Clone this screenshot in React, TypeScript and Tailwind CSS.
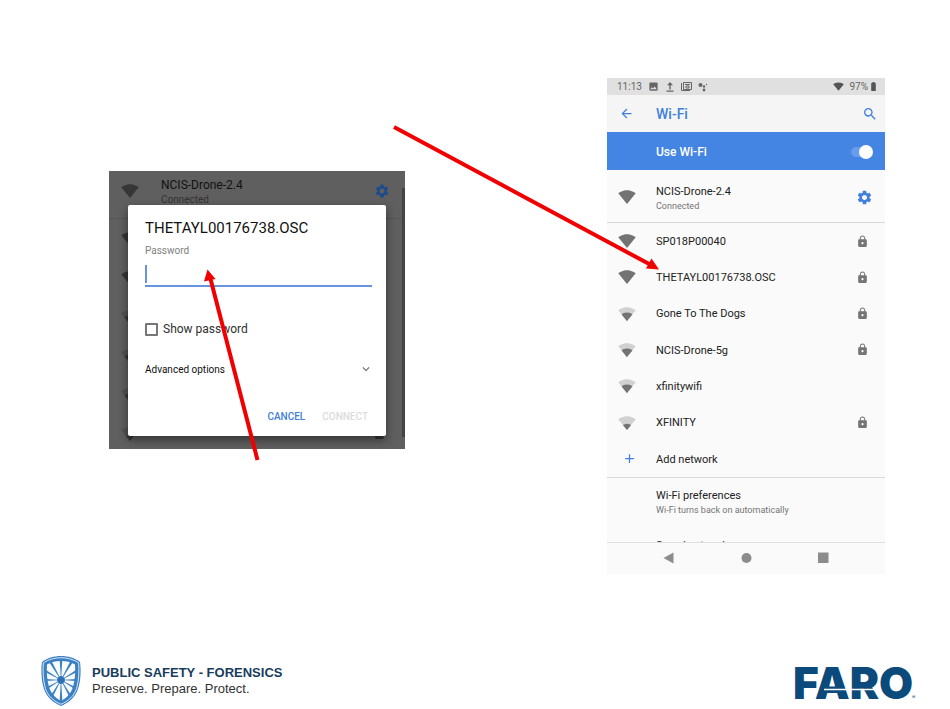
import React from 'react';
import {
  MdAdd,
  MdArrowBack,
  MdBatteryFull,
  MdExpandMore,
  MdImage,
  MdLock,
  MdSearch,
  MdSettings,
} from 'react-icons/md';

interface Network {
  name: string;
  bars: number;
  locked: boolean;
}

const networks: Network[] = [
  { name: 'SP018P00040', bars: 4, locked: true },
  { name: 'THETAYL00176738.OSC', bars: 4, locked: true },
  { name: 'Gone To The Dogs', bars: 2, locked: true },
  { name: 'NCIS-Drone-5g', bars: 2, locked: true },
  { name: 'xfinitywifi', bars: 2, locked: false },
  { name: 'XFINITY', bars: 1, locked: true },
];

function WifiIcon({ bars, className }: { bars: number; className?: string }) {
  return (
    <svg viewBox="0 0 24 24" fill="currentColor" className={className} aria-hidden="true">
      <path
        opacity={bars === 4 ? 1 : 0.3}
        d="M12.01 21.49L23.64 7c-.45-.34-4.93-4-11.64-4C5.28 3 .81 6.66.36 7l11.63 14.49.01.01z"
      />
      {bars === 2 && <path d="M4.79 12.52l7.2 8.98H12l.01-.01 7.2-8.98C18.85 12.24 16.1 10 12 10s-6.85 2.24-7.21 2.52z" />}
      {bars === 1 && <path d="M6.67 14.86L12 21.49v.01l.01-.01 5.33-6.63C17.06 14.65 15.03 13 12 13s-5.06 1.65-5.33 1.86z" />}
    </svg>
  );
}

function PasswordDialog() {
  return (
    <section className="relative mt-[93px] flow-root min-w-0 flex-[296_1_0%] self-start bg-[#5f5f5f]">
      {/* dimmed network list behind the dialog */}
      <div className="absolute inset-0 overflow-hidden text-[#363636]" aria-hidden="true">
        <div className="flex h-12 items-start border-b border-[#565656] pl-3 pr-[15px] pt-2">
          <WifiIcon bars={4} className="mt-[3px] size-[18px]" />
          <div className="ml-[22px] flex-1 text-[#111]">
            <div className="text-[12px] leading-3">NCIS-Drone-2.4</div>
            <div className="mt-[3px] text-[10px] leading-3 text-[#333]">Connected</div>
          </div>
          <MdSettings className="mt-1 size-4 text-[#1f4a8c]" />
        </div>
        {networks.map((n) => (
          <div key={n.name} className="flex h-[39px] items-center justify-between pl-3 pr-[19px]">
            <WifiIcon bars={n.bars} className="size-[18px]" />
            {n.locked && <MdLock className="size-[13px]" />}
          </div>
        ))}
        <div className="absolute bottom-3 right-0 top-[17px] w-[3px] bg-[#444]" />
      </div>

      <form
        className="relative mb-[13px] ml-[19px] mr-[19px] mt-[34px] rounded-[2px] bg-white pb-3 pl-[17px] pr-[14px] pt-[13px] shadow-[0_4px_10px_rgba(0,0,0,0.45)]"
        onSubmit={(e) => e.preventDefault()}
      >
        <h2 className="text-[15px] font-normal leading-5 text-[#111]">THETAYL00176738.OSC</h2>
        <label htmlFor="password" className="mt-[7px] block text-[10px] leading-3 text-[#808080]">
          Password
        </label>
        <div className="relative mt-1">
          <input
            id="password"
            type="password"
            className="block h-[26px] w-full border-b-2 border-[#6794dc] bg-transparent text-[12px] outline-none"
          />
          <span className="absolute left-0 top-1 h-[18px] w-[2px] bg-[#6794dc]" />
        </div>
        <label className="mt-[34px] flex h-4 items-center gap-[5px] text-[12px] text-[#303030]">
          <input type="checkbox" className="size-[13px] appearance-none rounded-[1px] border-2 border-[#777]" />
          Show password
        </label>
        <button type="button" className="mt-6 flex h-4 w-full items-center justify-between text-[10px] text-[#111]">
          Advanced options
          <MdExpandMore className="-mr-px size-[14px] text-[#666]" />
        </button>
        <div className="mt-[31px] flex h-4 items-center justify-end gap-[17px] pr-1 text-[10px] font-medium">
          <button type="button" className="text-[#4080dc]">CANCEL</button>
          <button type="submit" disabled className="text-[#dcdcdc]">CONNECT</button>
        </div>
      </form>

      <svg viewBox="0 0 60 200" className="absolute left-[92px] top-[96px] h-[200px] w-[60px]" aria-hidden="true">
        <path d="M56.500 193L9 10" stroke="#f00000" strokeWidth="4" fill="none" />
        <path d="M6.500 2.500L14.500 12L3 14.500Z" fill="#f00000" />
      </svg>
    </section>
  );
}

function StatusBar() {
  return (
    <div className="flex h-[17px] items-center bg-[#e0e0e0] pl-[10px] pr-[6px] text-[10px] text-[#666]">
      <span>11:13</span>
      <MdImage className="ml-[6px] size-[11px]" />
      <svg viewBox="0 0 10 10" className="ml-[6px] size-[10px]" fill="currentColor" aria-hidden="true">
        <path d="M5 0L8 3.200H5.700V7.500H4.300V3.200H2ZM1.500 8.600H8.500V9.800H1.500Z" />
      </svg>
      <svg viewBox="0 0 11 11" className="ml-[6px] size-[11px]" fill="none" stroke="currentColor" aria-hidden="true">
        <path d="M.5 2V9.500H9M2.500 1.500H10.500V8.500H2.500Z" />
        <path d="M4 3.500H9M5 5H8V7H5Z" />
      </svg>
      <svg viewBox="0 0 10 10" className="ml-[6px] size-[10px]" fill="currentColor" aria-hidden="true">
        <circle cx="2.500" cy="3" r="2" />
        <circle cx="6" cy="4.500" r="1.200" />
        <circle cx="8.500" cy="2.500" r=".7" />
        <circle cx="6" cy="8" r="1.400" />
      </svg>
      <WifiIcon bars={4} className="ml-auto size-[11px] text-[#555]" />
      <span className="ml-[5px]">97%</span>
      <MdBatteryFull className="size-[11px] text-[#555]" />
    </div>
  );
}

function WifiSettings() {
  return (
    <section className="relative min-w-0 flex-[278_1_0%] bg-[#fafafa] text-[11px] text-[#212121]">
      <StatusBar />
      <header className="flex h-[37px] items-center bg-[#f5f5f5] pl-3 pr-[7px] text-[#4080dc]">
        <button type="button" aria-label="Back">
          <MdArrowBack className="size-[15px]" />
        </button>
        <h1 className="ml-[22px] flex-1 pt-px text-[14px] font-medium">Wi-Fi</h1>
        <button type="button" aria-label="Search">
          <MdSearch className="size-4" />
        </button>
      </header>
      <label className="mb-[2px] flex h-[38px] items-center justify-between bg-[#4484e2] pl-[49px] pr-3 pt-[2px] text-[12px] font-medium text-white">
        Use Wi-Fi
        <input
          type="checkbox"
          role="switch"
          defaultChecked
          className="relative h-[14px] w-[22px] appearance-none before:absolute before:left-0 before:top-[2px] before:h-[10px] before:w-[18px] before:rounded-full before:bg-[#699cea] after:absolute after:right-0 after:top-0 after:size-[14px] after:rounded-full after:bg-white"
        />
      </label>

      <div className="flex h-[51px] items-center border-b border-[#dadada] pl-[11px] pr-3">
        <WifiIcon bars={4} className="size-[18px] text-[#737373]" />
        <div className="ml-5 flex-1 pt-[3px]">
          <div className="leading-[14px]">NCIS-Drone-2.4</div>
          <div className="text-[9px] leading-[14px] text-[#757575]">Connected</div>
        </div>
        <button type="button" aria-label="Network details" className="text-[#4080dc]">
          <MdSettings className="size-[17px]" />
        </button>
      </div>

      <ul className="grid min-h-[255px] auto-rows-fr border-b border-[#dadada]">
        {networks.map((n) => (
          <li key={n.name} className="flex items-center pl-[11px] pr-4">
            <WifiIcon bars={n.bars} className="size-[18px] text-[#737373]" />
            <span className="ml-5 flex-1 pt-[2px]">{n.name}</span>
            {n.locked && <MdLock className="size-[13px] text-[#757575]" />}
          </li>
        ))}
        <li>
          <button type="button" className="flex h-full w-full items-center pl-[15px] text-left">
            <MdAdd className="size-[15px] text-[#4080dc]" />
            <span className="ml-[19px] pt-[2px]">Add network</span>
          </button>
        </li>
      </ul>

      {/* the next entry peeks in above the navigation bar */}
      <div className="h-[64px] overflow-hidden pl-[49px] pt-[11px]">
        <div className="leading-[14px]">Wi-Fi preferences</div>
        <div className="text-[9px] leading-[14px] text-[#757575]">Wi-Fi turns back on automatically</div>
        <div className="mt-[22px] leading-[14px]">Saved networks</div>
      </div>

      <nav className="flex h-8 items-center justify-between border-t border-[#dedede] px-14 pb-[2px] text-[#8c8c8c]">
        <button type="button" aria-label="Navigate back">
          <svg viewBox="0 0 12 12" className="size-3" fill="currentColor"><path d="M.5 6L10.500 .5V11.500Z" /></svg>
        </button>
        <button type="button" aria-label="Home">
          <svg viewBox="0 0 12 12" className="size-3" fill="currentColor"><circle cx="6.500" cy="6" r="5" /></svg>
        </button>
        <button type="button" aria-label="Recent apps">
          <svg viewBox="0 0 12 12" className="size-3" fill="currentColor"><path d="M1 .5H11.500V11H1Z" /></svg>
        </button>
      </nav>

      <svg viewBox="0 0 275 155" className="absolute -left-[217px] top-[42px] h-[155px] w-[275px]" aria-hidden="true">
        <path d="M4 7L261 145" stroke="#f00000" strokeWidth="4" fill="none" />
        <path d="M269 149.500L256 148.500L261.500 138.500Z" fill="#f00000" />
      </svg>
    </section>
  );
}

function Shield() {
  // gaps between the spokes of the wheel, one every 30 degrees
  const gaps = Array.from({ length: 12 }, (_, i) => i * 30);
  return (
    <svg viewBox="0 0 42 52" className="h-[52px] w-[42px]" aria-hidden="true">
      <defs>
        <clipPath id="shield-inner">
          <path d="M21 6C26 6 31 7 35 9.500C35.500 17 35 25 33 32C31 38.500 26.500 43 21 46C15.500 43 11 38.500 9 32C7 25 6.500 17 7 9.500C11 7 16 6 21 6Z" />
        </clipPath>
      </defs>
      <path d="M21 1C28 1 35 3 40 7C41 14 41 25 38 34C35 43 28 48 21 51C14 48 7 43 4 34C1 25 1 14 2 7C7 3 14 1 21 1Z" fill="#3c80c4" />
      <path d="M21 2.700C27 2.700 34 4.500 38.600 7.800C39.300 15 39 25 36.600 33.500C34 41.500 27.500 46.500 21 49.300C14.500 46.500 8 41.500 5.400 33.500C3 25 2.700 15 3.400 7.800C8 4.500 15 2.700 21 2.700Z" fill="none" stroke="#fff" strokeWidth=".8" />
      <g clipPath="url(#shield-inner)">
        {gaps.map((deg) => (
          <path key={deg} d="M20.300 21L17 5V-2H25V5L21.700 21Z" fill="#f8fcff" transform={`rotate(${deg + 15} 21 25)`} />
        ))}
      </g>
      <circle cx="21" cy="25" r="3" fill="#2f6fb0" />
    </svg>
  );
}

function FaroLogo() {
  return (
    <svg viewBox="0 0 124 60" className="-my-3 h-[60px] w-[124px] font-[Inter,sans-serif]" role="img" aria-label="FARO">
      <text x="0" y="48" fontWeight="900" fontSize="44" fill="#0b4a7a">FARO</text>
      <path d="M31 38.500H84" stroke="#fff" strokeWidth="1.500" />
      <text x="119" y="48" fontSize="5" fill="#0b4a7a">®</text>
    </svg>
  );
}

export default function App() {
  return (
    <div className="flex min-h-screen flex-col bg-white font-[Roboto,sans-serif]">
      <main className="flex items-start gap-[202px] pb-20 pl-[109px] pr-[65px] pt-[78px]">
        <PasswordDialog />
        <WifiSettings />
      </main>
      <footer className="mt-auto flex items-center justify-between pb-[2px] pl-10 pr-[33px]">
        <div className="flex items-center gap-[10px] font-['Liberation_Sans',sans-serif]">
          <Shield />
          <div className="text-[13px] leading-4">
            <p className="font-bold text-[#183c5c]">PUBLIC SAFETY - FORENSICS</p>
            <p className="text-[#333]">Preserve. Prepare. Protect.</p>
          </div>
        </div>
        <FaroLogo />
      </footer>
    </div>
  );
}
